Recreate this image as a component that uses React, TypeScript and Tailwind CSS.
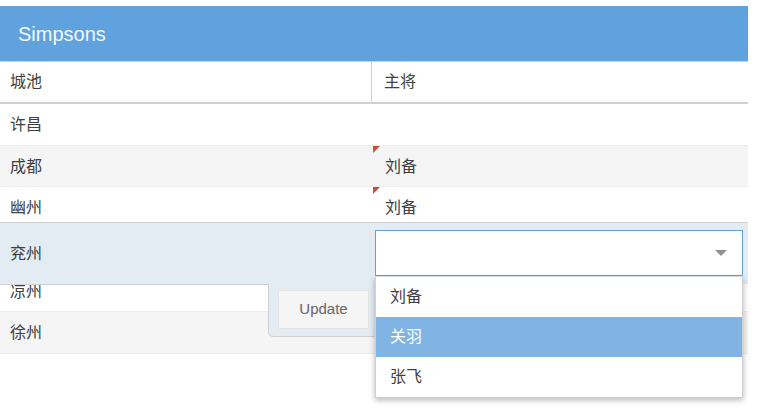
import React from "react"

const font = {fontFamily: '"Liberation Sans", "Noto Sans CJK SC", sans-serif'}

const rows = [
    {city: "许昌", general: "", dirty: false},
    {city: "成都", general: "刘备", dirty: true},
    {city: "幽州", general: "刘备", dirty: true},
    {city: "兖州", general: "", dirty: false},
    {city: "凉州", general: "", dirty: false},
    {city: "徐州", general: "", dirty: false},
]

const options = ["刘备", "关羽", "张飞"]

const Row = ({city, general, dirty, alt}: {city: string; general: string; dirty: boolean; alt: boolean}) => (
    <div className={`flex h-[41.6px] border-b border-[#ececec] ${alt ? "bg-[#f5f5f5]" : "bg-white"}`}>
        <div className="flex w-[372px] items-center pl-[10px] pt-[2px]">{city}</div>
        <div className="relative flex flex-1 items-center pl-[13px] pt-[2px]">
            {dirty && (
                <span className="absolute left-[1px] top-0 h-0 w-0 border-r-[7px] border-t-[7px] border-r-transparent border-t-[#cf4c35]" />
            )}
            {general}
        </div>
    </div>
)

export default function App() {
    return (
        <div className="h-[415px] w-[783px] bg-white pt-[6px] text-[16px] text-[#404040]" style={font}>
            <div className="relative w-[748px]">
                <div className="flex h-[56px] items-center border-b border-[#d0d0d0] bg-[#5fa2dd] pl-[18px] text-[20px] text-[#f4f8fc]">
                    Simpsons
                </div>
                <div className="flex h-[42px] border-b-2 border-[#d0d0d0]">
                    <div className="flex w-[372px] items-center border-r border-[#d0d0d0] pl-[10px]">城池</div>
                    <div className="flex flex-1 items-center pl-[12px]">主将</div>
                </div>
                {rows.map((r, i) => (
                    <Row key={r.city} {...r} alt={i % 2 === 1} />
                ))}

                {/* row editor */}
                <div className="absolute left-0 top-[216px] h-[62px] w-[748px] border-t border-[#d0d0d0] bg-[#e3ebf3]">
                    <div className="flex h-full items-center pl-[10px]">兖州</div>
                    <div className="absolute left-0 top-[61px] h-0 w-[268px] border-b border-[#d0d0d0]" />
                    <div className="absolute left-[375px] top-[7px] flex h-[46px] w-[368px] items-center justify-end border border-[#5fa2dd] bg-white pr-[15px]">
                        <span className="h-0 w-0 border-x-[6px] border-t-[6px] border-x-transparent border-t-[#919191]" />
                    </div>
                </div>
                <div className="absolute left-[268px] top-[278px] flex h-[53px] w-[212px] items-start gap-[12px] rounded-bl-[5px] border-b border-l border-r border-[#d0d0d0] bg-[#e3ebf3] pl-[9px] pt-[6px]">
                    <button className="h-[39px] w-[91px] border border-[#e4e4e4] bg-[#f5f5f5] text-[15px] text-[#666]">Update</button>
                    <button className="h-[39px] w-[91px] border border-[#e4e4e4] bg-[#f5f5f5] text-[15px] text-[#666]">Cancel</button>
                </div>

                {/* combo dropdown */}
                <div className="absolute left-[375px] top-[271px] w-[368px] border border-t-0 border-[#d0d0d0] bg-white shadow-[0_2px_6px_rgba(0,0,0,0.3)]">
                    {options.map((o) => (
                        <div
                            key={o}
                            className={`flex h-[40px] items-center pl-[14px] ${o === "关羽" ? "bg-[#7fb4e4] text-white" : ""}`}
                        >
                            {o}
                        </div>
                    ))}
                </div>
            </div>
        </div>
    )
}
